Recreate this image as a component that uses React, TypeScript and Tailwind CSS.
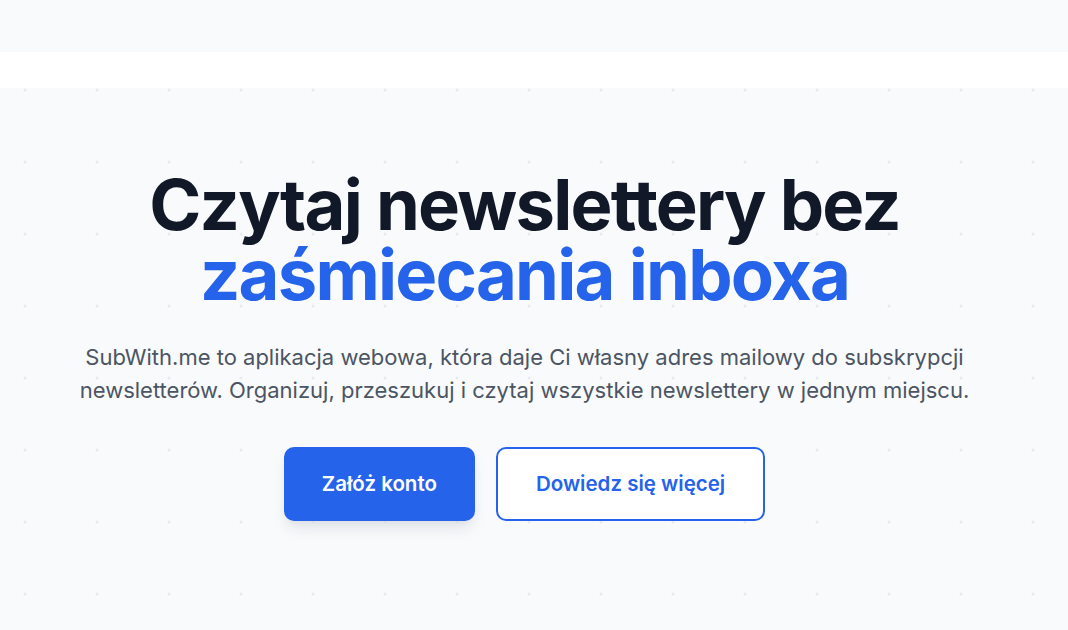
export default function App() {
  return (
    <div className="min-h-[630px] bg-[#f9fafb] font-['Inter',sans-serif]">
      <div className="h-[52px] bg-[#f9fafb]" />
      <div className="h-[36px] bg-white" />
      <section className="bg-[#f9fafb] bg-[radial-gradient(circle,#e6e9ee_1.2px,transparent_1.7px)] bg-[size:72px_72px] bg-[position:-11px_-34px] pt-[82px] pb-[110px] pr-[19px]">
        <div className="mx-auto flex max-w-[960px] flex-col items-center text-center">
          <h1 className="text-[70.5px] font-bold leading-[70px] tracking-[-0.025em] text-[#111827]">
            Czytaj newslettery bez
            <br />
            <span className="text-[#2563eb]">zaśmiecania inboxa</span>
          </h1>
          <p className="mt-[31px] max-w-[940px] text-[22px] leading-[33px] text-[#4b5563]">
            SubWith.me to aplikacja webowa, która daje Ci własny adres mailowy do subskrypcji newsletterów. Organizuj, przeszukuj i czytaj wszystkie newslettery w jednym miejscu.
          </p>
          <div className="mt-[40px] flex gap-[21px]">
            <button className="h-[74px] rounded-[10px] bg-[#2563eb] px-[38px] text-[20.5px] font-semibold text-white shadow-lg shadow-gray-300/60">
              Załóż konto
            </button>
            <button className="h-[74px] rounded-[10px] border-2 border-[#2563eb] bg-white px-[38px] text-[20.5px] font-semibold text-[#2563eb]">
              Dowiedz się więcej
            </button>
          </div>
        </div>
      </section>
    </div>
  )
}
